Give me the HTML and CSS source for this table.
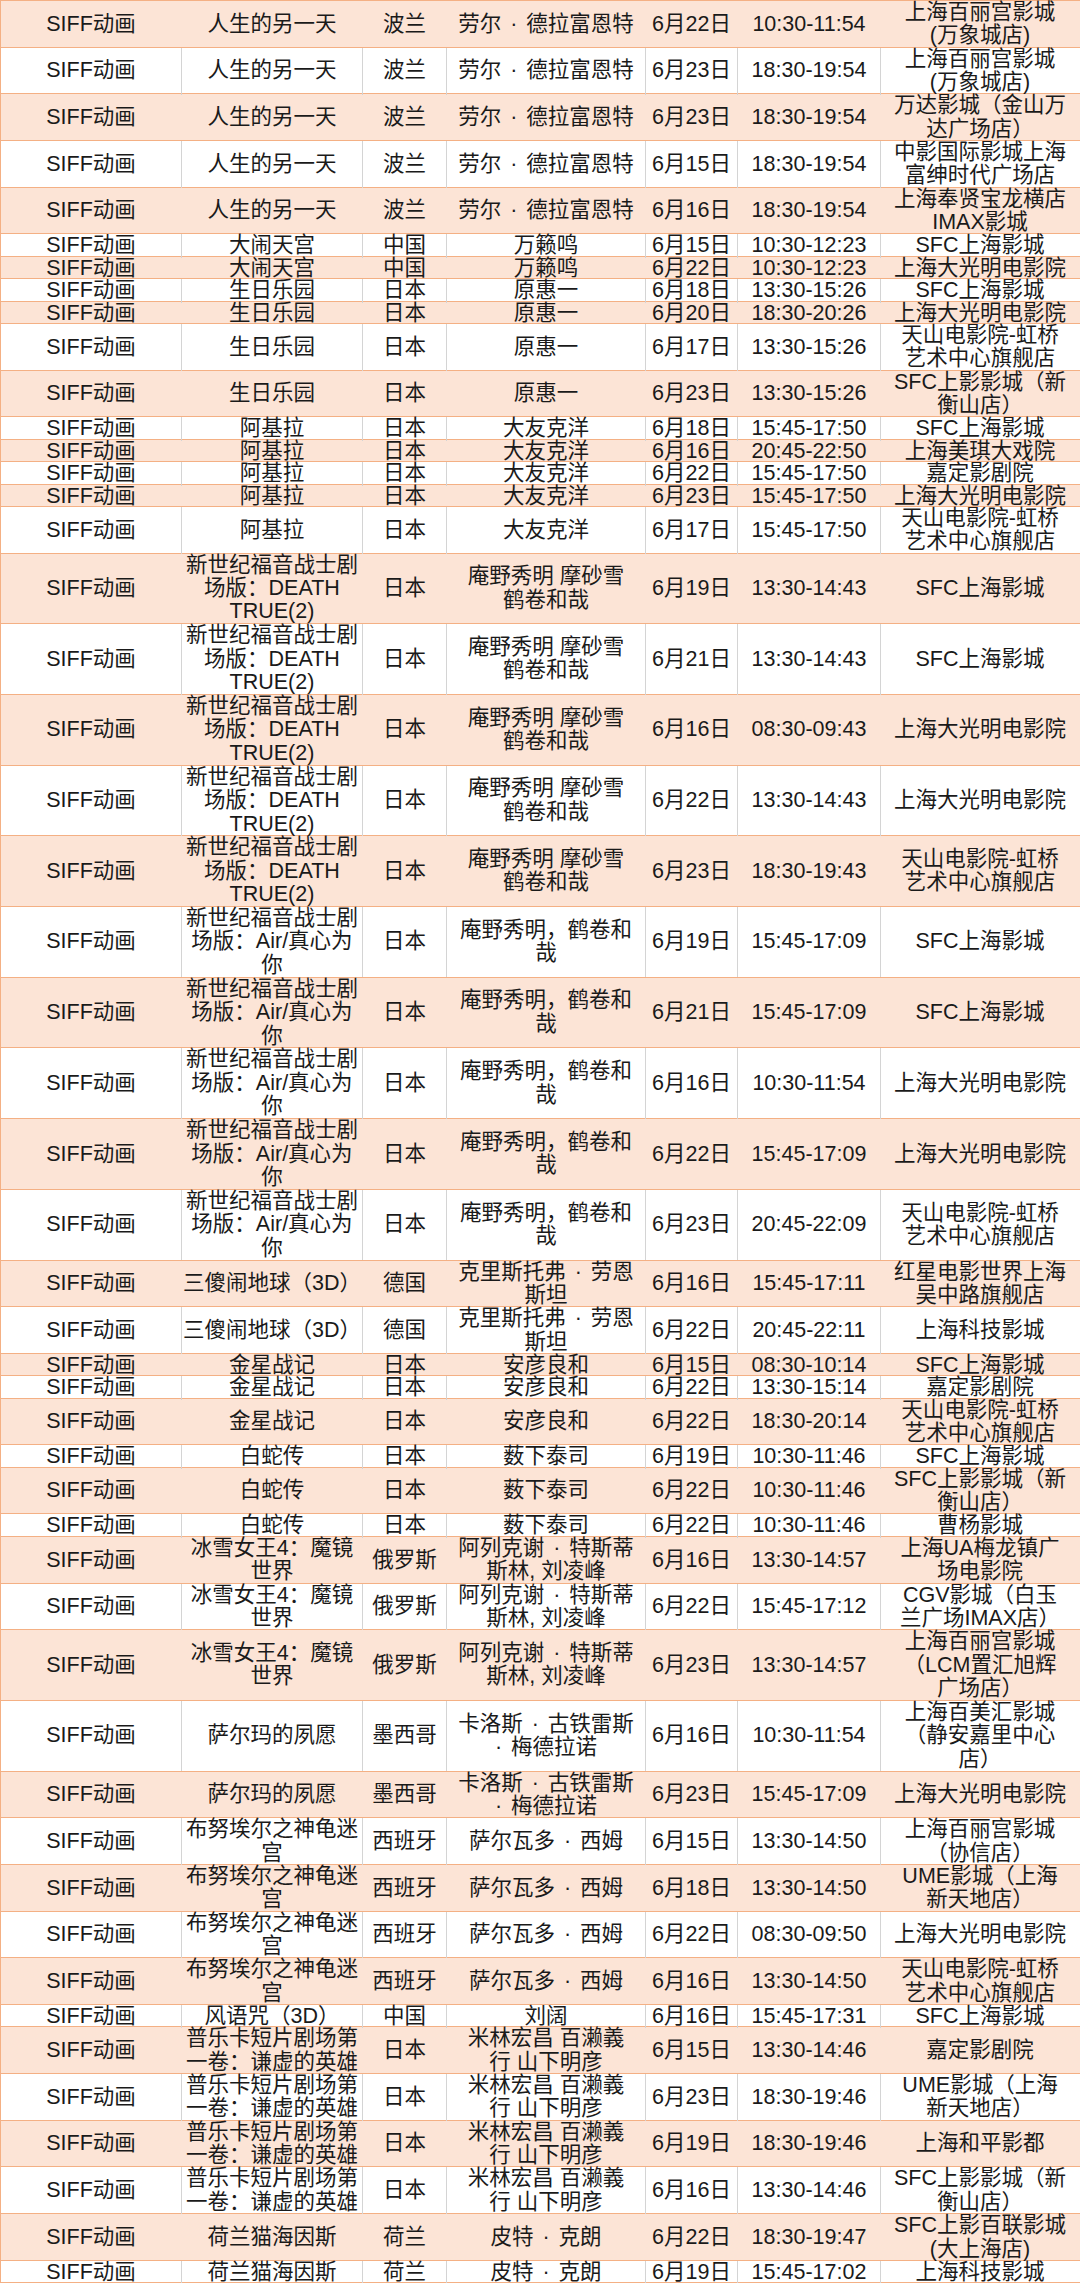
FILE: index.html
```html
<!DOCTYPE html>
<html lang="zh-CN">
<head>
<meta charset="utf-8">
<title>SIFF动画 排片表</title>
<link rel="stylesheet" href="styles.css">
</head>
<body>
<div class="sheet">
  <div class="row peach h2"><div class="c"><span>SIFF动画</span></div><div class="c"><span>人生的另一天</span></div><div class="c"><span>波兰</span></div><div class="c"><span>劳尔<i class="dot">·</i>德拉富恩特</span></div><div class="c"><span>6月22日</span></div><div class="c"><span>10:30-11:54</span></div><div class="c"><span>上海百丽宫影城<br>(万象城店)</span></div></div>
  <div class="row white h2"><div class="c"><span>SIFF动画</span></div><div class="c"><span>人生的另一天</span></div><div class="c"><span>波兰</span></div><div class="c"><span>劳尔<i class="dot">·</i>德拉富恩特</span></div><div class="c"><span>6月23日</span></div><div class="c"><span>18:30-19:54</span></div><div class="c"><span>上海百丽宫影城<br>(万象城店)</span></div></div>
  <div class="row peach h2"><div class="c"><span>SIFF动画</span></div><div class="c"><span>人生的另一天</span></div><div class="c"><span>波兰</span></div><div class="c"><span>劳尔<i class="dot">·</i>德拉富恩特</span></div><div class="c"><span>6月23日</span></div><div class="c"><span>18:30-19:54</span></div><div class="c"><span>万达影城（金山万<br>达广场店）</span></div></div>
  <div class="row white h2"><div class="c"><span>SIFF动画</span></div><div class="c"><span>人生的另一天</span></div><div class="c"><span>波兰</span></div><div class="c"><span>劳尔<i class="dot">·</i>德拉富恩特</span></div><div class="c"><span>6月15日</span></div><div class="c"><span>18:30-19:54</span></div><div class="c"><span>中影国际影城上海<br>富绅时代广场店</span></div></div>
  <div class="row peach h2"><div class="c"><span>SIFF动画</span></div><div class="c"><span>人生的另一天</span></div><div class="c"><span>波兰</span></div><div class="c"><span>劳尔<i class="dot">·</i>德拉富恩特</span></div><div class="c"><span>6月16日</span></div><div class="c"><span>18:30-19:54</span></div><div class="c"><span>上海奉贤宝龙横店<br>IMAX影城</span></div></div>
  <div class="row white h1"><div class="c"><span>SIFF动画</span></div><div class="c"><span>大闹天宫</span></div><div class="c"><span>中国</span></div><div class="c"><span>万籁鸣</span></div><div class="c"><span>6月15日</span></div><div class="c"><span>10:30-12:23</span></div><div class="c"><span>SFC上海影城</span></div></div>
  <div class="row peach h1"><div class="c"><span>SIFF动画</span></div><div class="c"><span>大闹天宫</span></div><div class="c"><span>中国</span></div><div class="c"><span>万籁鸣</span></div><div class="c"><span>6月22日</span></div><div class="c"><span>10:30-12:23</span></div><div class="c"><span>上海大光明电影院</span></div></div>
  <div class="row white h1"><div class="c"><span>SIFF动画</span></div><div class="c"><span>生日乐园</span></div><div class="c"><span>日本</span></div><div class="c"><span>原惠一</span></div><div class="c"><span>6月18日</span></div><div class="c"><span>13:30-15:26</span></div><div class="c"><span>SFC上海影城</span></div></div>
  <div class="row peach h1"><div class="c"><span>SIFF动画</span></div><div class="c"><span>生日乐园</span></div><div class="c"><span>日本</span></div><div class="c"><span>原惠一</span></div><div class="c"><span>6月20日</span></div><div class="c"><span>18:30-20:26</span></div><div class="c"><span>上海大光明电影院</span></div></div>
  <div class="row white h2"><div class="c"><span>SIFF动画</span></div><div class="c"><span>生日乐园</span></div><div class="c"><span>日本</span></div><div class="c"><span>原惠一</span></div><div class="c"><span>6月17日</span></div><div class="c"><span>13:30-15:26</span></div><div class="c"><span>天山电影院-虹桥<br>艺术中心旗舰店</span></div></div>
  <div class="row peach h2"><div class="c"><span>SIFF动画</span></div><div class="c"><span>生日乐园</span></div><div class="c"><span>日本</span></div><div class="c"><span>原惠一</span></div><div class="c"><span>6月23日</span></div><div class="c"><span>13:30-15:26</span></div><div class="c"><span>SFC上影影城（新<br>衡山店）</span></div></div>
  <div class="row white h1"><div class="c"><span>SIFF动画</span></div><div class="c"><span>阿基拉</span></div><div class="c"><span>日本</span></div><div class="c"><span>大友克洋</span></div><div class="c"><span>6月18日</span></div><div class="c"><span>15:45-17:50</span></div><div class="c"><span>SFC上海影城</span></div></div>
  <div class="row peach h1"><div class="c"><span>SIFF动画</span></div><div class="c"><span>阿基拉</span></div><div class="c"><span>日本</span></div><div class="c"><span>大友克洋</span></div><div class="c"><span>6月16日</span></div><div class="c"><span>20:45-22:50</span></div><div class="c"><span>上海美琪大戏院</span></div></div>
  <div class="row white h1"><div class="c"><span>SIFF动画</span></div><div class="c"><span>阿基拉</span></div><div class="c"><span>日本</span></div><div class="c"><span>大友克洋</span></div><div class="c"><span>6月22日</span></div><div class="c"><span>15:45-17:50</span></div><div class="c"><span>嘉定影剧院</span></div></div>
  <div class="row peach h1"><div class="c"><span>SIFF动画</span></div><div class="c"><span>阿基拉</span></div><div class="c"><span>日本</span></div><div class="c"><span>大友克洋</span></div><div class="c"><span>6月23日</span></div><div class="c"><span>15:45-17:50</span></div><div class="c"><span>上海大光明电影院</span></div></div>
  <div class="row white h2"><div class="c"><span>SIFF动画</span></div><div class="c"><span>阿基拉</span></div><div class="c"><span>日本</span></div><div class="c"><span>大友克洋</span></div><div class="c"><span>6月17日</span></div><div class="c"><span>15:45-17:50</span></div><div class="c"><span>天山电影院-虹桥<br>艺术中心旗舰店</span></div></div>
  <div class="row peach h3"><div class="c"><span>SIFF动画</span></div><div class="c"><span>新世纪福音战士剧<br>场版：DEATH<br>TRUE(2)</span></div><div class="c"><span>日本</span></div><div class="c"><span>庵野秀明 摩砂雪<br>鹤卷和哉</span></div><div class="c"><span>6月19日</span></div><div class="c"><span>13:30-14:43</span></div><div class="c"><span>SFC上海影城</span></div></div>
  <div class="row white h3"><div class="c"><span>SIFF动画</span></div><div class="c"><span>新世纪福音战士剧<br>场版：DEATH<br>TRUE(2)</span></div><div class="c"><span>日本</span></div><div class="c"><span>庵野秀明 摩砂雪<br>鹤卷和哉</span></div><div class="c"><span>6月21日</span></div><div class="c"><span>13:30-14:43</span></div><div class="c"><span>SFC上海影城</span></div></div>
  <div class="row peach h3"><div class="c"><span>SIFF动画</span></div><div class="c"><span>新世纪福音战士剧<br>场版：DEATH<br>TRUE(2)</span></div><div class="c"><span>日本</span></div><div class="c"><span>庵野秀明 摩砂雪<br>鹤卷和哉</span></div><div class="c"><span>6月16日</span></div><div class="c"><span>08:30-09:43</span></div><div class="c"><span>上海大光明电影院</span></div></div>
  <div class="row white h3"><div class="c"><span>SIFF动画</span></div><div class="c"><span>新世纪福音战士剧<br>场版：DEATH<br>TRUE(2)</span></div><div class="c"><span>日本</span></div><div class="c"><span>庵野秀明 摩砂雪<br>鹤卷和哉</span></div><div class="c"><span>6月22日</span></div><div class="c"><span>13:30-14:43</span></div><div class="c"><span>上海大光明电影院</span></div></div>
  <div class="row peach h3"><div class="c"><span>SIFF动画</span></div><div class="c"><span>新世纪福音战士剧<br>场版：DEATH<br>TRUE(2)</span></div><div class="c"><span>日本</span></div><div class="c"><span>庵野秀明 摩砂雪<br>鹤卷和哉</span></div><div class="c"><span>6月23日</span></div><div class="c"><span>18:30-19:43</span></div><div class="c"><span>天山电影院-虹桥<br>艺术中心旗舰店</span></div></div>
  <div class="row white h3"><div class="c"><span>SIFF动画</span></div><div class="c"><span>新世纪福音战士剧<br>场版：Air/真心为<br>你</span></div><div class="c"><span>日本</span></div><div class="c"><span>庵野秀明，鹤卷和<br>哉</span></div><div class="c"><span>6月19日</span></div><div class="c"><span>15:45-17:09</span></div><div class="c"><span>SFC上海影城</span></div></div>
  <div class="row peach h3"><div class="c"><span>SIFF动画</span></div><div class="c"><span>新世纪福音战士剧<br>场版：Air/真心为<br>你</span></div><div class="c"><span>日本</span></div><div class="c"><span>庵野秀明，鹤卷和<br>哉</span></div><div class="c"><span>6月21日</span></div><div class="c"><span>15:45-17:09</span></div><div class="c"><span>SFC上海影城</span></div></div>
  <div class="row white h3"><div class="c"><span>SIFF动画</span></div><div class="c"><span>新世纪福音战士剧<br>场版：Air/真心为<br>你</span></div><div class="c"><span>日本</span></div><div class="c"><span>庵野秀明，鹤卷和<br>哉</span></div><div class="c"><span>6月16日</span></div><div class="c"><span>10:30-11:54</span></div><div class="c"><span>上海大光明电影院</span></div></div>
  <div class="row peach h3"><div class="c"><span>SIFF动画</span></div><div class="c"><span>新世纪福音战士剧<br>场版：Air/真心为<br>你</span></div><div class="c"><span>日本</span></div><div class="c"><span>庵野秀明，鹤卷和<br>哉</span></div><div class="c"><span>6月22日</span></div><div class="c"><span>15:45-17:09</span></div><div class="c"><span>上海大光明电影院</span></div></div>
  <div class="row white h3"><div class="c"><span>SIFF动画</span></div><div class="c"><span>新世纪福音战士剧<br>场版：Air/真心为<br>你</span></div><div class="c"><span>日本</span></div><div class="c"><span>庵野秀明，鹤卷和<br>哉</span></div><div class="c"><span>6月23日</span></div><div class="c"><span>20:45-22:09</span></div><div class="c"><span>天山电影院-虹桥<br>艺术中心旗舰店</span></div></div>
  <div class="row peach h2"><div class="c"><span>SIFF动画</span></div><div class="c"><span>三傻闹地球（3D）</span></div><div class="c"><span>德国</span></div><div class="c"><span>克里斯托弗<i class="dot">·</i>劳恩<br>斯坦</span></div><div class="c"><span>6月16日</span></div><div class="c"><span>15:45-17:11</span></div><div class="c"><span>红星电影世界上海<br>吴中路旗舰店</span></div></div>
  <div class="row white h2"><div class="c"><span>SIFF动画</span></div><div class="c"><span>三傻闹地球（3D）</span></div><div class="c"><span>德国</span></div><div class="c"><span>克里斯托弗<i class="dot">·</i>劳恩<br>斯坦</span></div><div class="c"><span>6月22日</span></div><div class="c"><span>20:45-22:11</span></div><div class="c"><span>上海科技影城</span></div></div>
  <div class="row peach h1"><div class="c"><span>SIFF动画</span></div><div class="c"><span>金星战记</span></div><div class="c"><span>日本</span></div><div class="c"><span>安彦良和</span></div><div class="c"><span>6月15日</span></div><div class="c"><span>08:30-10:14</span></div><div class="c"><span>SFC上海影城</span></div></div>
  <div class="row white h1"><div class="c"><span>SIFF动画</span></div><div class="c"><span>金星战记</span></div><div class="c"><span>日本</span></div><div class="c"><span>安彦良和</span></div><div class="c"><span>6月22日</span></div><div class="c"><span>13:30-15:14</span></div><div class="c"><span>嘉定影剧院</span></div></div>
  <div class="row peach h2"><div class="c"><span>SIFF动画</span></div><div class="c"><span>金星战记</span></div><div class="c"><span>日本</span></div><div class="c"><span>安彦良和</span></div><div class="c"><span>6月22日</span></div><div class="c"><span>18:30-20:14</span></div><div class="c"><span>天山电影院-虹桥<br>艺术中心旗舰店</span></div></div>
  <div class="row white h1"><div class="c"><span>SIFF动画</span></div><div class="c"><span>白蛇传</span></div><div class="c"><span>日本</span></div><div class="c"><span>薮下泰司</span></div><div class="c"><span>6月19日</span></div><div class="c"><span>10:30-11:46</span></div><div class="c"><span>SFC上海影城</span></div></div>
  <div class="row peach h2"><div class="c"><span>SIFF动画</span></div><div class="c"><span>白蛇传</span></div><div class="c"><span>日本</span></div><div class="c"><span>薮下泰司</span></div><div class="c"><span>6月22日</span></div><div class="c"><span>10:30-11:46</span></div><div class="c"><span>SFC上影影城（新<br>衡山店）</span></div></div>
  <div class="row white h1"><div class="c"><span>SIFF动画</span></div><div class="c"><span>白蛇传</span></div><div class="c"><span>日本</span></div><div class="c"><span>薮下泰司</span></div><div class="c"><span>6月22日</span></div><div class="c"><span>10:30-11:46</span></div><div class="c"><span>曹杨影城</span></div></div>
  <div class="row peach h2"><div class="c"><span>SIFF动画</span></div><div class="c"><span>冰雪女王4：魔镜<br>世界</span></div><div class="c"><span>俄罗斯</span></div><div class="c"><span>阿列克谢<i class="dot">·</i>特斯蒂<br>斯林, 刘凌峰</span></div><div class="c"><span>6月16日</span></div><div class="c"><span>13:30-14:57</span></div><div class="c"><span>上海UA梅龙镇广<br>场电影院</span></div></div>
  <div class="row white h2"><div class="c"><span>SIFF动画</span></div><div class="c"><span>冰雪女王4：魔镜<br>世界</span></div><div class="c"><span>俄罗斯</span></div><div class="c"><span>阿列克谢<i class="dot">·</i>特斯蒂<br>斯林, 刘凌峰</span></div><div class="c"><span>6月22日</span></div><div class="c"><span>15:45-17:12</span></div><div class="c"><span>CGV影城（白玉<br>兰广场IMAX店）</span></div></div>
  <div class="row peach h3"><div class="c"><span>SIFF动画</span></div><div class="c"><span>冰雪女王4：魔镜<br>世界</span></div><div class="c"><span>俄罗斯</span></div><div class="c"><span>阿列克谢<i class="dot">·</i>特斯蒂<br>斯林, 刘凌峰</span></div><div class="c"><span>6月23日</span></div><div class="c"><span>13:30-14:57</span></div><div class="c"><span>上海百丽宫影城<br>（LCM置汇旭辉<br>广场店）</span></div></div>
  <div class="row white h3"><div class="c"><span>SIFF动画</span></div><div class="c"><span>萨尔玛的夙愿</span></div><div class="c"><span>墨西哥</span></div><div class="c"><span>卡洛斯<i class="dot">·</i>古铁雷斯<br><i class="dot lead">·</i>梅德拉诺</span></div><div class="c"><span>6月16日</span></div><div class="c"><span>10:30-11:54</span></div><div class="c"><span>上海百美汇影城<br>（静安嘉里中心<br>店）</span></div></div>
  <div class="row peach h2"><div class="c"><span>SIFF动画</span></div><div class="c"><span>萨尔玛的夙愿</span></div><div class="c"><span>墨西哥</span></div><div class="c"><span>卡洛斯<i class="dot">·</i>古铁雷斯<br><i class="dot lead">·</i>梅德拉诺</span></div><div class="c"><span>6月23日</span></div><div class="c"><span>15:45-17:09</span></div><div class="c"><span>上海大光明电影院</span></div></div>
  <div class="row white h2"><div class="c"><span>SIFF动画</span></div><div class="c"><span>布努埃尔之神龟迷<br>宫</span></div><div class="c"><span>西班牙</span></div><div class="c"><span>萨尔瓦多<i class="dot">·</i>西姆</span></div><div class="c"><span>6月15日</span></div><div class="c"><span>13:30-14:50</span></div><div class="c"><span>上海百丽宫影城<br>（协信店）</span></div></div>
  <div class="row peach h2"><div class="c"><span>SIFF动画</span></div><div class="c"><span>布努埃尔之神龟迷<br>宫</span></div><div class="c"><span>西班牙</span></div><div class="c"><span>萨尔瓦多<i class="dot">·</i>西姆</span></div><div class="c"><span>6月18日</span></div><div class="c"><span>13:30-14:50</span></div><div class="c"><span>UME影城（上海<br>新天地店）</span></div></div>
  <div class="row white h2"><div class="c"><span>SIFF动画</span></div><div class="c"><span>布努埃尔之神龟迷<br>宫</span></div><div class="c"><span>西班牙</span></div><div class="c"><span>萨尔瓦多<i class="dot">·</i>西姆</span></div><div class="c"><span>6月22日</span></div><div class="c"><span>08:30-09:50</span></div><div class="c"><span>上海大光明电影院</span></div></div>
  <div class="row peach h2"><div class="c"><span>SIFF动画</span></div><div class="c"><span>布努埃尔之神龟迷<br>宫</span></div><div class="c"><span>西班牙</span></div><div class="c"><span>萨尔瓦多<i class="dot">·</i>西姆</span></div><div class="c"><span>6月16日</span></div><div class="c"><span>13:30-14:50</span></div><div class="c"><span>天山电影院-虹桥<br>艺术中心旗舰店</span></div></div>
  <div class="row white h1"><div class="c"><span>SIFF动画</span></div><div class="c"><span>风语咒（3D）</span></div><div class="c"><span>中国</span></div><div class="c"><span>刘阔</span></div><div class="c"><span>6月16日</span></div><div class="c"><span>15:45-17:31</span></div><div class="c"><span>SFC上海影城</span></div></div>
  <div class="row peach h2"><div class="c"><span>SIFF动画</span></div><div class="c"><span>普乐卡短片剧场第<br>一卷：谦虚的英雄</span></div><div class="c"><span>日本</span></div><div class="c"><span>米林宏昌 百濑義<br>行 山下明彦</span></div><div class="c"><span>6月15日</span></div><div class="c"><span>13:30-14:46</span></div><div class="c"><span>嘉定影剧院</span></div></div>
  <div class="row white h2"><div class="c"><span>SIFF动画</span></div><div class="c"><span>普乐卡短片剧场第<br>一卷：谦虚的英雄</span></div><div class="c"><span>日本</span></div><div class="c"><span>米林宏昌 百濑義<br>行 山下明彦</span></div><div class="c"><span>6月23日</span></div><div class="c"><span>18:30-19:46</span></div><div class="c"><span>UME影城（上海<br>新天地店）</span></div></div>
  <div class="row peach h2"><div class="c"><span>SIFF动画</span></div><div class="c"><span>普乐卡短片剧场第<br>一卷：谦虚的英雄</span></div><div class="c"><span>日本</span></div><div class="c"><span>米林宏昌 百濑義<br>行 山下明彦</span></div><div class="c"><span>6月19日</span></div><div class="c"><span>18:30-19:46</span></div><div class="c"><span>上海和平影都</span></div></div>
  <div class="row white h2"><div class="c"><span>SIFF动画</span></div><div class="c"><span>普乐卡短片剧场第<br>一卷：谦虚的英雄</span></div><div class="c"><span>日本</span></div><div class="c"><span>米林宏昌 百濑義<br>行 山下明彦</span></div><div class="c"><span>6月16日</span></div><div class="c"><span>13:30-14:46</span></div><div class="c"><span>SFC上影影城（新<br>衡山店）</span></div></div>
  <div class="row peach h2"><div class="c"><span>SIFF动画</span></div><div class="c"><span>荷兰猫海因斯</span></div><div class="c"><span>荷兰</span></div><div class="c"><span>皮特<i class="dot">·</i>克朗</span></div><div class="c"><span>6月22日</span></div><div class="c"><span>18:30-19:47</span></div><div class="c"><span>SFC上影百联影城<br>(大上海店)</span></div></div>
  <div class="row white h1"><div class="c"><span>SIFF动画</span></div><div class="c"><span>荷兰猫海因斯</span></div><div class="c"><span>荷兰</span></div><div class="c"><span>皮特<i class="dot">·</i>克朗</span></div><div class="c"><span>6月19日</span></div><div class="c"><span>15:45-17:02</span></div><div class="c"><span>上海科技影城</span></div></div>
</div>
</body>
</html>
```

FILE: styles.css
```css
* { box-sizing: border-box; }

html, body {
  margin: 0;
  padding: 0;
  background: #ffffff;
}

body {
  font-family: "Liberation Sans", "Noto Sans CJK SC", sans-serif;
  font-size: 21.5px;
  color: #1a1a1a;
}

.sheet {
  width: 1080px;
  border-top: 1px solid #f4b084;
  border-left: 1px solid #f4b084;
}

.row {
  display: grid;
  grid-template-columns: 181px 181px 84px 199px 92px 143px 199px;
  border-bottom: 1px solid #f4b084;
}

.row.h1 { height: 22.4px; }
.row.h2 { height: 46.7px; }
.row.h3 { height: 70.7px; }

.row.peach { background: #fce4d6; }
.row.white { background: #ffffff; }

.c {
  display: flex;
  align-items: center;
  justify-content: center;
  text-align: center;
  line-height: 23.4px;
  min-width: 0;
  border-right: 1px solid transparent;
}

.row.white .c { border-right-color: #d4d4d4; }
.row.white .c:last-child { border-right-color: transparent; }

.c span {
  white-space: nowrap;
}

.dot {
  font-style: normal;
  display: inline-block;
  margin: 0 9px;
}

.dot.lead {
  margin-left: 0;
}
```
